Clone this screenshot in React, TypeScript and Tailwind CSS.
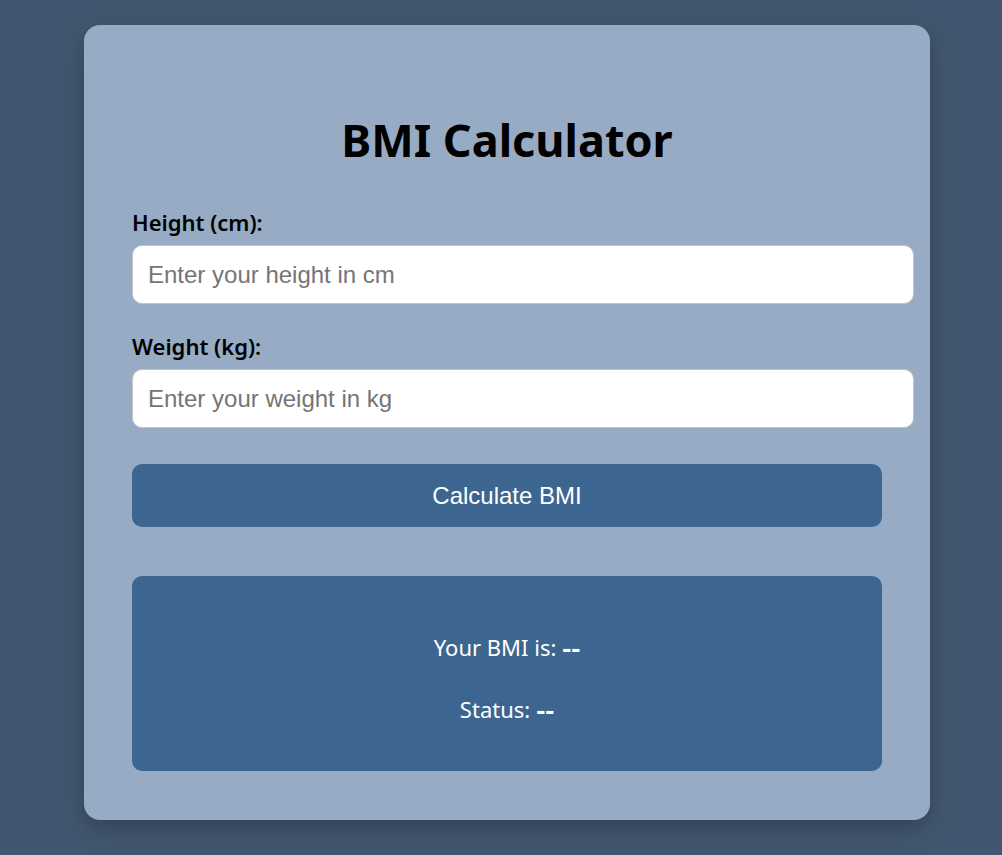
export default function App() {
  return (
    <div className="min-h-screen w-full bg-[#42576f] pt-[25px] pb-[35px]">
      <div className="ml-[84px] w-[846px] rounded-[16px] bg-[#97abc4] px-[48px] pt-[48px] pb-[49px] shadow-[0_8px_24px_rgba(0,0,0,0.25)] font-['Noto_Sans',sans-serif]">
        <h1 className="mt-[38px] text-center text-[45px] font-bold leading-[58px] text-black">
          BMI Calculator
        </h1>

        <label className="mt-[39px] block text-[22px] font-semibold leading-[28px] text-black">
          Height (cm):
        </label>
        <input
          type="number"
          placeholder="Enter your height in cm"
          className="mt-[9px] block h-[59px] w-[782px] rounded-[10px] border border-[#c4c4c4] bg-white px-[15px] font-['Liberation_Sans',Arial,sans-serif] text-[24px] text-black placeholder:text-[#757575] outline-none"
        />

        <label className="mt-[28px] block text-[22px] font-semibold leading-[28px] text-black">
          Weight (kg):
        </label>
        <input
          type="number"
          placeholder="Enter your weight in kg"
          className="mt-[9px] block h-[59px] w-[782px] rounded-[10px] border border-[#c4c4c4] bg-white px-[15px] font-['Liberation_Sans',Arial,sans-serif] text-[24px] text-black placeholder:text-[#757575] outline-none"
        />

        <button className="mt-[36px] flex h-[63px] w-full items-center justify-center rounded-[10px] bg-[#3c6690] font-['Liberation_Sans',Arial,sans-serif] text-[24px] text-white">
          Calculate BMI
        </button>

        <div className="mt-[49px] flex h-[195px] flex-col items-center gap-[30px] rounded-[10px] bg-[#3c6690] pt-[55px] text-[22px] text-white">
          <p className="flex h-[32px] items-center gap-[6px]">
            <span>Your BMI is:</span>
            <span className="text-[28px] font-semibold">--</span>
          </p>
          <p className="flex h-[32px] items-center gap-[6px]">
            <span>Status:</span>
            <span className="text-[28px] font-semibold">--</span>
          </p>
        </div>
      </div>
    </div>
  );
}
